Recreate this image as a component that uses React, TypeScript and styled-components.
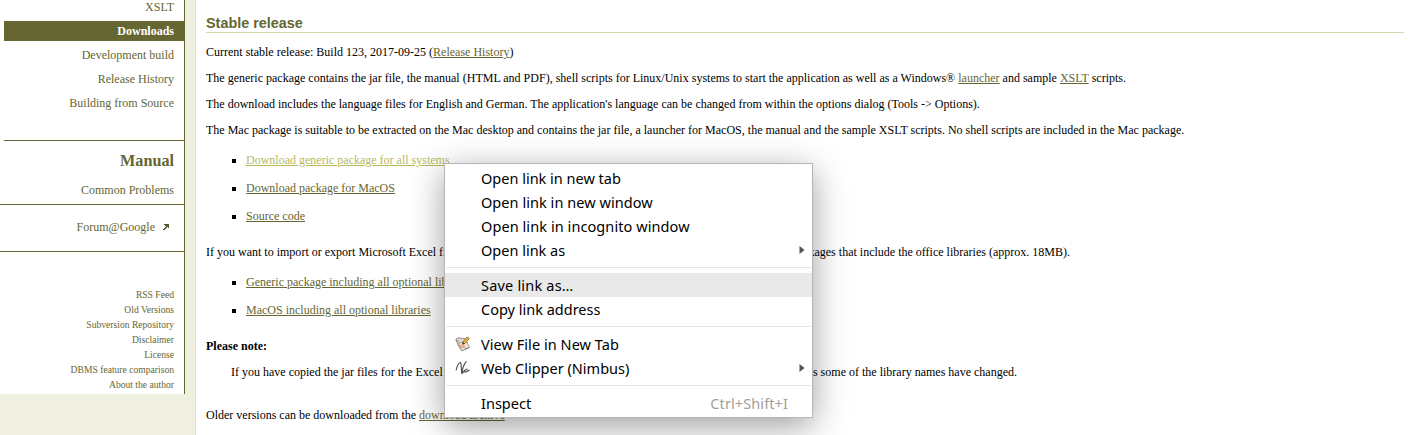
import React from "react";
import styled, { createGlobalStyle } from "styled-components";

const GlobalStyle = createGlobalStyle`
  body {
    margin: 0;
    background: #f0f0e0;
    font: 12px/16px "Liberation Serif", "Times New Roman", serif;
    color: #000;
    overflow: hidden;
  }
`;

const Page = styled.div`
  display: flex;
  align-items: flex-start;
  height: 435px;
  overflow: hidden;
`;

const Sidebar = styled.nav`
  box-sizing: border-box;
  width: 185px;
  height: 394px;
  background: #fff;
  border-right: 1px solid #666633;
  color: #666633;
  text-align: right;
`;

const NavGroup = styled.div`
  height: 140px;
  margin-left: 4px;
  border-bottom: 1px solid #666633;
  overflow: hidden;
`;

const NavItem = styled.div<{ $active?: boolean; $first?: boolean }>`
  height: 20px;
  line-height: 20px;
  margin-top: ${(p) => (p.$first ? "-3px" : "4px")};
  padding-right: 10px;
  ${(p) => p.$active && "background: #666633; color: #fff; font-weight: bold;"}
`;

const ManualGroup = styled.div`
  box-sizing: border-box;
  height: 64px;
  padding: 10px 10px 0 0;
  border-bottom: 1px solid #666633;
`;

const ManualTitle = styled.div`
  font-size: 16.2px;
  line-height: 20px;
  font-weight: bold;
  margin-bottom: 11px;
`;

const ForumGroup = styled.div`
  box-sizing: border-box;
  display: flex;
  justify-content: flex-end;
  align-items: center;
  gap: 8px;
  height: 47px;
  padding: 0 15px 2px 0;
  border-bottom: 1px solid #666633;
`;

const SmallLinks = styled.div`
  padding: 35px 10px 0 0;
  font-size: 9.6px;
  line-height: 15px;
`;

const Main = styled.main`
  box-sizing: border-box;
  flex: 1;
  height: 435px;
  margin-left: 10px;
  padding: 14px 4px 0 10px;
  background: #fff;
  border-left: 1px solid #ddd;
  white-space: nowrap;
`;

const Heading = styled.h2`
  margin: 0 0 11px;
  height: 18px;
  border-bottom: 1px solid #d8d8a8;
  font: bold 14.4px/18px "Liberation Sans", Arial, sans-serif;
  color: #666633;
`;

const Paragraph = styled.p<{ $gap?: number }>`
  margin: 0 0 ${(p) => p.$gap ?? 10}px;
  letter-spacing: 0.003px;
`;

const SplitLine = styled(Paragraph)<{ $width: number; $indent?: number }>`
  display: flex;
  justify-content: space-between;
  width: ${(p) => p.$width}px;
  margin-left: ${(p) => p.$indent ?? 0}px;
`;

const Link = styled.span<{ $hover?: boolean }>`
  color: ${(p) => (p.$hover ? "#b8b85c" : "#666633")};
  text-decoration: underline;
`;

const List = styled.ul`
  list-style: none;
  margin: 0 0 20px;
  padding: 4px 0 0 26px;
`;

const Item = styled.li`
  display: flex;
  align-items: center;
  gap: 10px;
  height: 16px;
  margin-bottom: 12px;
`;

const Bullet = styled.span`
  width: 4px;
  height: 4px;
  margin-top: 2px;
  background: #000;
`;

const Menu = styled.div`
  position: absolute;
  left: 444px;
  top: 163px;
  box-sizing: border-box;
  width: 369px;
  height: 255px;
  padding-top: 2px;
  background: #fff;
  border: 1px solid #b5b5b5;
  box-shadow: 0 8px 32px rgba(0, 0, 0, 0.38);
  font: 15px/24px "Noto Sans", "Open Sans", sans-serif;
  white-space: nowrap;
`;

const MenuRow = styled.div<{ $selected?: boolean }>`
  display: flex;
  align-items: center;
  height: 24px;
  padding-right: 7px;
  background: ${(p) => (p.$selected ? "#e9e9e9" : "transparent")};
`;

const IconSlot = styled.span`
  display: flex;
  width: 26px;
  padding-left: 10px;
`;

const Label = styled.span<{ $spacing: number }>`
  flex: 1;
  font-size: 14.5px;
  letter-spacing: ${(p) => p.$spacing}px;
`;

const Shortcut = styled.span`
  margin-right: 17px;
  font-size: 14.5px;
  letter-spacing: 0.1px;
  color: #a09f98;
`;

const Separator = styled.div<{ $above: number; $below: number }>`
  height: 1px;
  margin: ${(p) => p.$above}px 1px ${(p) => p.$below}px;
  background: #e6e6e6;
`;

const Arrow = () => (
  <svg width="6" height="8" viewBox="0 0 6 8">
    <path d="M.5 0 5.5 4 .5 8z" fill="#555" />
  </svg>
);

const ExternalIcon = () => (
  <svg width="6" height="6" viewBox="0 0 6 6" shapeRendering="crispEdges">
    <path d="M1 0h5v4H5V3H4v1H3v1H2v1H0V5h1V4h1V3h1V2H2V1H1z" fill="#55552b" />
    <path d="M2 1h3v2H4v1H2V3h1V2H2z" fill="#55552b" />
  </svg>
);

const NotesIcon = () => (
  <svg width="16" height="16" viewBox="0 0 16 16">
    <path d="M.8 3.3 3 1.8l8 1 2.4 8-6.4 4-3.4-4.6z" fill="#dedbd6" stroke="#85817b" strokeWidth=".9" />
    <path d="m3.5 7 8-1.7 3.2 6.2-8 3.3z" fill="#ece5df" stroke="#88827b" strokeWidth=".7" />
    <path d="m1 4.5 2.6.6M9.5 13.2l4.2-1.7" stroke="#77736e" strokeWidth=".9" />
    <path d="m4.6 9.2 4.2-1.4 1.8 3.2-4.4 1.8z" fill="#f0a88f" />
    <path d="m7.6 8 .4-2.2L12.2.9l2.1 1.5-4.4 5z" fill="#edb52e" stroke="#8c6426" strokeWidth=".8" />
    <path d="m7.3 8.4.5-2.3 1.9 1.4z" fill="#463a31" />
  </svg>
);

const ClipperIcon = () => (
  <svg width="16" height="16" viewBox="0 0 16 16" fill="none" stroke="#4d4d4d" strokeLinecap="round" strokeLinejoin="round">
    <path d="M1.2 10C1.8 6.6 3.4 3.2 5.4 2.4 6.6 2.6 5.8 8.5 7 13.4" strokeWidth="1.1" />
    <path d="M7 13.4C7.2 9 9 4.2 11.2 1.6M7 13.4c1.6-2.2 3.4-3.8 5.2-4.4M8.8 12c1.8.2 3.6-.6 5.4-1.8" strokeWidth="1.1" />
  </svg>
);

type Entry = { label: string; spacing: number; selected?: boolean; icon?: React.ReactNode; arrow?: boolean; shortcut?: string };

const sections: { entries: Entry[]; above: number; below: number }[] = [
  {
    entries: [
      { label: "Open link in new tab", spacing: 0 },
      { label: "Open link in new window", spacing: 0.05 },
      { label: "Open link in incognito window", spacing: 0.08 },
      { label: "Open link as", spacing: 0, arrow: true },
    ],
    above: 5,
    below: 5,
  },
  {
    entries: [
      { label: "Save link as…", spacing: 0.2, selected: true },
      { label: "Copy link address", spacing: 0 },
    ],
    above: 5,
    below: 5,
  },
  {
    entries: [
      { label: "View File in New Tab", spacing: 0.05, icon: <NotesIcon /> },
      { label: "Web Clipper (Nimbus)", spacing: 0, icon: <ClipperIcon />, arrow: true },
    ],
    above: 5,
    below: 5,
  },
  { entries: [{ label: "Inspect", spacing: 0, shortcut: "Ctrl+Shift+I" }], above: 0, below: 0 },
];

const ListItem = ({ text, hover }: { text: string; hover?: boolean }) => (
  <Item>
    <Bullet />
    <Link $hover={hover}>{text}</Link>
  </Item>
);

export default function App() {
  return (
    <>
      <GlobalStyle />
      <Page>
        <Sidebar>
          <NavGroup>
            <NavItem $first>XSLT</NavItem>
            <NavItem $active>Downloads</NavItem>
            <NavItem>Development build</NavItem>
            <NavItem>Release History</NavItem>
            <NavItem>Building from Source</NavItem>
          </NavGroup>
          <ManualGroup>
            <ManualTitle>Manual</ManualTitle>
            Common Problems
          </ManualGroup>
          <ForumGroup>
            Forum@Google <ExternalIcon />
          </ForumGroup>
          <SmallLinks>
            {["RSS Feed", "Old Versions", "Subversion Repository", "Disclaimer", "License", "DBMS feature comparison", "About the author"].map((t) => (
              <div key={t}>{t}</div>
            ))}
          </SmallLinks>
        </Sidebar>
        <Main>
          <Heading>Stable release</Heading>
          <Paragraph>
            Current stable release: Build 123, 2017-09-25 (<Link>Release History</Link>)
          </Paragraph>
          <Paragraph>
            The generic package contains the jar file, the manual (HTML and PDF), shell scripts for Linux/Unix systems to start the application as well as a
            Windows® <Link>launcher</Link> and sample <Link>XSLT</Link> scripts.
          </Paragraph>
          <Paragraph>
            The download includes the language files for English and German. The application's language can be changed from within the options dialog (Tools
            -&gt; Options).
          </Paragraph>
          <Paragraph>
            The Mac package is suitable to be extracted on the Mac desktop and contains the jar file, a launcher for MacOS, the manual and the sample XSLT
            scripts. No shell scripts are included in the Mac package.
          </Paragraph>
          <List>
            <ListItem text="Download generic package for all systems" hover />
            <ListItem text="Download package for MacOS" />
            <ListItem text="Source code" />
          </List>
          <SplitLine $width={864}>
            <span>If you want to import or export Microsoft Excel files</span>
            <span>packages that include the office libraries (approx. 18MB).</span>
          </SplitLine>
          <List>
            <ListItem text="Generic package including all optional libraries" />
            <ListItem text="MacOS including all optional libraries" />
          </List>
          <Paragraph>
            <b>Please note:</b>
          </Paragraph>
          <SplitLine $width={786} $indent={25} $gap={27}>
            <span>If you have copied the jar files for the Excel</span>
            <span>as some of the library names have changed.</span>
          </SplitLine>
          <Paragraph>
            Older versions can be downloaded from the <Link>download archive</Link>
          </Paragraph>
        </Main>
      </Page>
      <Menu>
        {sections.map((section, i) => (
          <React.Fragment key={i}>
            {section.entries.map((e) => (
              <MenuRow key={e.label} $selected={e.selected}>
                <IconSlot>{e.icon}</IconSlot>
                <Label $spacing={e.spacing}>{e.label}</Label>
                {e.shortcut && <Shortcut>{e.shortcut}</Shortcut>}
                {e.arrow && <Arrow />}
              </MenuRow>
            ))}
            {i < sections.length - 1 && <Separator $above={section.above} $below={section.below} />}
          </React.Fragment>
        ))}
      </Menu>
    </>
  );
}
